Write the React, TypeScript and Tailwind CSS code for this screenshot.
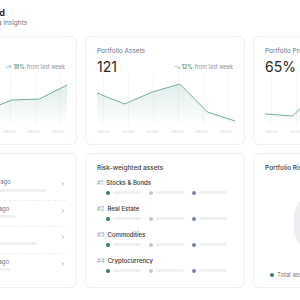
import React from 'react';
import { ChevronRight, TrendingUp, TrendingDown } from 'lucide-react';

const W = 138;
const H = 50;
const ticks = [6.5, 31.5, 56.5, 81.5, 106.5, 131.5];

const MiniChart = ({ id, points }: { id: string; points: number[] }) => {
  const step = W / (points.length - 1);
  const line = points.map((y, i) => `${i === 0 ? 'M' : 'L'}${(i * step).toFixed(1)},${y}`).join(' ');
  const area = `${line} L${W},${H} L0,${H} Z`;

  return (
    <div>
      <svg width={W} height={H} viewBox={`0 0 ${W} ${H}`} className="block">
        <defs>
          <linearGradient id={id} x1="0" y1="0" x2="0" y2="1">
            <stop offset="0%" stopColor="#74aca1" stopOpacity="0.22" />
            <stop offset="100%" stopColor="#74aca1" stopOpacity="0" />
          </linearGradient>
        </defs>
        {ticks.map((x) => (
          <line key={x} x1={x} y1={0} x2={x} y2={H} stroke="#e8eaed" strokeWidth="0.8" strokeDasharray="1.5 1.5" />
        ))}
        <path d={area} fill={`url(#${id})`} />
        <path d={line} fill="none" stroke="#74aca1" strokeWidth="1" strokeLinejoin="round" />
      </svg>
      <div className="mt-[6px] flex justify-between">
        {ticks.map((x) => (
          <span key={x} className="h-[3px] w-[13px] rounded-full bg-[#eef0f2]" />
        ))}
      </div>
    </div>
  );
};

const stats = [
  { id: 'g1', title: 'Active Portfolio', value: '$48k', change: '18%', up: true, points: [30, 40, 37, 26, 25, 11] },
  { id: 'g2', title: 'Portfolio Assets', value: '121', change: '12%', up: false, points: [19, 30, 18, 10, 38, 47] },
  { id: 'g3', title: 'Portfolio Progress', value: '65%', change: '5%', up: true, points: [40, 42, 15, 20, 8, 18] },
];

const activity = [
  { text: 'Rebalanced 3 hours ago', bar: 'w-[104px]' },
  { text: 'Dividend paid 1 day ago', bar: 'w-[74px]' },
  { text: 'Deposit 15 days ago', bar: 'w-[95px]' },
  { text: 'Withdrawals 12 min ago', bar: 'w-[68px]' },
];

const risks = ['Stocks & Bonds', 'Real Estate', 'Commodities', 'Cryptocurrency'];
const dotColors = ['bg-[#2f7d70]', 'bg-[#c3c7cd]', 'bg-[#7483a3]'];

export default function App() {
  return (
    <div className="h-[300px] w-[300px] overflow-hidden bg-white text-[#1f2937] [font-family:Inter,'Noto_Sans',sans-serif]">
      <div className="ml-[-83px] w-[496px]">
        <header className="pl-[40px] pt-[7px]">
          <h1 className="text-[9px] font-bold leading-[12px]">Dashboard</h1>
          <p className="text-[6.5px] leading-[9px] text-[#6b7280]">Real-time data insights</p>
        </header>

        <div className="mt-[8px] grid grid-cols-3 gap-[8px]">
          {stats.map((s) => (
            <div key={s.id} className="h-[109px] rounded-[6px] border border-[#efefef] bg-white px-[11px] pt-[10px]">
              <p className="text-[6.5px] leading-[9px] text-[#6b7280]">{s.title}</p>
              <div className="mt-[3px] flex items-center justify-between">
                <span className="text-[14px] leading-[15px] text-[#262626]">{s.value}</span>
                <span className="flex items-center gap-[2px] text-[5.5px] leading-[8px]">
                  {s.up ? (
                    <TrendingUp className="h-[6px] w-[6px] text-[#4f9a8d]" strokeWidth={2} />
                  ) : (
                    <TrendingDown className="h-[6px] w-[6px] text-[#4f9a8d]" strokeWidth={2} />
                  )}
                  <b className="font-semibold text-[#4f9a8d]">{s.change}</b>
                  <span className="text-[#8a94a3]">from last week</span>
                </span>
              </div>
              <MiniChart id={s.id} points={s.points} />
            </div>
          ))}
        </div>

        <div className="mt-[8px] grid grid-cols-3 gap-[8px]">
          <div className="h-[135px] rounded-[6px] border border-[#efefef] bg-white pl-[11px] pr-[10px] pt-[10px]">
            <p className="text-[6.5px] font-medium leading-[9px] text-[#404040]">Recent activity</p>
            <ul className="mt-[1px]">
              {activity.map((a, i) => (
                <li
                  key={a.text}
                  className={`flex items-center gap-[3px] pt-[3px] pb-[8px] ${i < 3 ? 'border-b border-dashed border-[#eceef0]' : ''}`}
                >
                  <span className="h-[10px] w-[10px] shrink-0 rounded-full bg-[#f1f3f4]" />
                  <div className="flex flex-1 flex-col gap-[2.5px]">
                    <span className="text-[6px] leading-[9px] text-[#6b7280]">{a.text}</span>
                    <span className={`h-[3px] rounded-full bg-[#eef0f2] ${a.bar}`} />
                  </div>
                  <ChevronRight className="h-[6px] w-[6px] text-[#6b7280]" strokeWidth={2} />
                </li>
              ))}
            </ul>
          </div>

          <div className="h-[135px] rounded-[6px] border border-[#efefef] bg-white px-[11px] pt-[10px]">
            <p className="text-[6.5px] font-medium leading-[9px] text-[#404040]">Risk-weighted assets</p>
            <div className="mt-[5px] flex flex-col gap-[9.5px]">
              {risks.map((r, i) => (
                <div key={r} className="flex flex-col gap-[3.5px]">
                  <div className="flex items-center gap-[3px] text-[6px] leading-[9px]">
                    <span className="text-[#9ca3af]">#{i + 1}</span>
                    <span className="font-medium text-[#333]">{r}</span>
                  </div>
                  <div className="flex gap-[8px] pl-[9px]">
                    {dotColors.map((c) => (
                      <div key={c} className="flex items-center gap-[3px]">
                        <span className={`h-[4px] w-[4px] rounded-full ${c}`} />
                        <span className="h-[3px] w-[28px] rounded-full bg-[#eef0f2]" />
                      </div>
                    ))}
                  </div>
                </div>
              ))}
            </div>
          </div>

          <div className="flex h-[135px] flex-col rounded-[6px] border border-[#efefef] bg-white px-[11px] pt-[10px]">
            <p className="text-[6.5px] font-medium leading-[9px] text-[#404040]">Portfolio Risk</p>
            <div className="mt-[10px] flex justify-center">
              <div className="h-[80px] w-[80px] rounded-full bg-[#eceef1]" />
            </div>
            <div className="mt-[7px] flex items-center gap-[3px] pl-[5px] text-[6px] leading-[9px] text-[#6b7280]">
              <span className="h-[4px] w-[4px] rounded-full bg-[#2f7d70]" />
              Total assets
            </div>
          </div>
        </div>
      </div>
    </div>
  );
}
